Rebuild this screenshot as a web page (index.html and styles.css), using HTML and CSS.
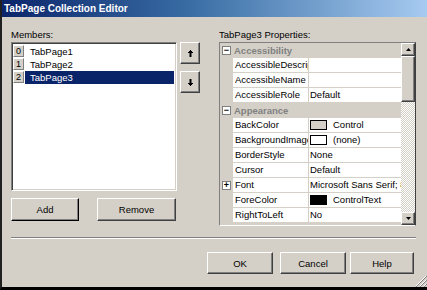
FILE: index.html
```html
<!DOCTYPE html>
<html>
<head>
<meta charset="utf-8">
<link rel="stylesheet" href="styles.css">
</head>
<body>
<div class="window">
  <div class="titlebar"><span class="title">TabPage Collection Editor</span></div>
  <div class="content">
    <div class="panes">
      <div class="left">
        <div class="label">Members:</div>
        <div class="listrow">
          <div class="list">
            <div class="item"><span class="idx">0</span><span class="iname">TabPage1</span></div>
            <div class="item"><span class="idx">1</span><span class="iname">TabPage2</span></div>
            <div class="item selected"><span class="idx">2</span><span class="iname">TabPage3</span></div>
          </div>
          <div class="movebtns">
            <div class="btn move"><svg width="5" height="7" viewBox="0 0 5 7"><rect x="2" y="0" width="1" height="1"/><rect x="1" y="1" width="3" height="1"/><rect x="0" y="2" width="5" height="1"/><rect x="1.5" y="3" width="2" height="4"/></svg></div>
            <div class="btn move down"><svg width="5" height="7" viewBox="0 0 5 7"><rect x="1.5" y="0" width="2" height="4"/><rect x="0" y="4" width="5" height="1"/><rect x="1" y="5" width="3" height="1"/><rect x="2" y="6" width="1" height="1"/></svg></div>
          </div>
        </div>
        <div class="addrow">
          <div class="btn add">Add</div>
          <div class="btn remove">Remove</div>
        </div>
      </div>
      <div class="right">
        <div class="label">TabPage3 Properties:</div>
        <div class="grid">
          <div class="rows">
            <div class="cat"><span class="margin"><span class="toggle">&#8722;</span></span><span class="cattext">Accessibility</span></div>
            <div class="prop"><span class="margin"></span><span class="pname">AccessibleDescription</span><span class="pval"></span></div>
            <div class="prop"><span class="margin"></span><span class="pname">AccessibleName</span><span class="pval"></span></div>
            <div class="prop"><span class="margin"></span><span class="pname">AccessibleRole</span><span class="pval">Default</span></div>
            <div class="cat"><span class="margin"><span class="toggle">&#8722;</span></span><span class="cattext">Appearance</span></div>
            <div class="prop"><span class="margin"></span><span class="pname">BackColor</span><span class="pval"><span class="swatch sw-control"></span>Control</span></div>
            <div class="prop"><span class="margin"></span><span class="pname">BackgroundImage</span><span class="pval"><span class="swatch sw-none"></span>(none)</span></div>
            <div class="prop"><span class="margin"></span><span class="pname">BorderStyle</span><span class="pval">None</span></div>
            <div class="prop"><span class="margin"></span><span class="pname">Cursor</span><span class="pval">Default</span></div>
            <div class="prop"><span class="margin"><span class="toggle">+</span></span><span class="pname">Font</span><span class="pval">Microsoft Sans Serif; 8.25pt</span></div>
            <div class="prop"><span class="margin"></span><span class="pname">ForeColor</span><span class="pval"><span class="swatch sw-text"></span>ControlText</span></div>
            <div class="prop"><span class="margin"></span><span class="pname">RightToLeft</span><span class="pval">No</span></div>
          </div>
          <div class="vscroll">
            <div class="sbtn"><svg width="5" height="3" viewBox="0 0 5 3"><polygon points="2.5,0 5,3 0,3"/></svg></div>
            <div class="thumb"></div>
            <div class="track"></div>
            <div class="sbtn"><svg width="5" height="3" viewBox="0 0 5 3"><polygon points="0,0 5,0 2.5,3"/></svg></div>
          </div>
        </div>
      </div>
    </div>
    <div class="sep"></div>
    <div class="footer">
      <div class="btn ok">OK</div>
      <div class="btn cancel">Cancel</div>
      <div class="btn help">Help</div>
    </div>
  </div>
  <svg class="grip" width="12" height="12" viewBox="0 0 12 12">
    <g stroke-width="1">
      <line x1="11" y1="1" x2="1" y2="11" stroke="#fff"/>
      <line x1="12" y1="1" x2="1" y2="12" stroke="#808080"/>
      <line x1="11" y1="5" x2="5" y2="11" stroke="#fff"/>
      <line x1="12" y1="5" x2="5" y2="12" stroke="#808080"/>
      <line x1="11" y1="9" x2="9" y2="11" stroke="#fff"/>
      <line x1="12" y1="9" x2="9" y2="12" stroke="#808080"/>
    </g>
  </svg>
</div>
</body>
</html>
```

FILE: styles.css
```css
* { box-sizing: border-box; }
html, body { margin: 0; padding: 0; background: #d4d0c8; }
body {
  font-family: "Liberation Sans", Arial, sans-serif;
  font-size: 9.5px;
  color: #000;
}
.window {
  position: relative;
  width: 427px;
  height: 290px;
  background: #d4d0c8;
  border-left: 2px solid #202020;
  border-bottom: 3px solid #000;
  overflow: hidden;
}
.titlebar {
  height: 17px;
  margin-left: -2px;
  padding: 3px 0 0 4px;
  background: linear-gradient(to right, #0a246a 0%, #3a6ea5 45%, #a6caf0 100%);
  color: #fff;
  font-weight: bold;
  font-size: 10px;
  line-height: 12px;
  white-space: nowrap;
}
.content {
  padding: 11px 11px 0 9px;
}
.panes {
  display: flex;
  gap: 19px;
}
.left { width: 189px; }
.right { width: 197px; }
.label {
  height: 14px;
  line-height: 14px;
  white-space: nowrap;
}
.listrow {
  display: flex;
  gap: 3px;
}
.list {
  width: 166px;
  height: 149px;
  background: #fff;
  border: 1px solid;
  border-color: #808080 #fff #fff #808080;
  box-shadow: inset 1px 1px #404040, inset -1px -1px #d4d0c8;
  padding: 2px 2px 0 1px;
}
.item {
  display: flex;
  height: 13px;
}
.idx {
  width: 11px;
  height: 12px;
  background: #d4d0c8;
  border: 1px solid;
  border-color: #fff #808080 #808080 #fff;
  font-size: 9px;
  line-height: 10px;
  text-align: center;
  margin-right: 1px;
}
.iname {
  flex: 1;
  padding-left: 5px;
  line-height: 13px;
}
.item.selected .iname {
  background: #0a246a;
  color: #fff;
}
.movebtns {
  display: flex;
  flex-direction: column;
  gap: 7px;
}
.btn {
  display: flex;
  align-items: center;
  justify-content: center;
  background: #d4d0c8;
  border: 1px solid;
  border-color: #fff #404040 #404040 #fff;
  box-shadow: inset -1px -1px #808080;
  white-space: nowrap;
}
.move { width: 20px; height: 22px; }
.move svg { fill: #000; }
.addrow {
  display: flex;
  margin-top: 7px;
  gap: 18px;
}
.add { width: 68px; height: 23px; border-color: #fff #000 #000 #fff; }
.remove { width: 79px; height: 23px; }
.grid {
  display: flex;
  height: 184px;
  border: 1px solid;
  border-color: #808080 #404040 #fff #808080;
  background: #d4d0c8;
}
.rows {
  flex: 1;
  overflow: hidden;
}
.cat, .prop {
  display: flex;
  height: 15px;
  white-space: nowrap;
}
.margin {
  width: 13px;
  flex: none;
  background: #d4d0c8;
  display: flex;
  align-items: center;
  padding-left: 2px;
}
.toggle {
  width: 9px;
  height: 9px;
  border: 1px solid #808080;
  background: #fff;
  font-size: 9px;
  line-height: 7px;
  text-align: center;
  font-weight: bold;
  color: #000;
}
.cattext {
  flex: 1;
  font-weight: bold;
  color: #808080;
  line-height: 15px;
  padding-left: 1px;
}
.pname {
  width: 76px;
  flex: none;
  overflow: hidden;
  background: #fff;
  border-right: 1px solid #d4d0c8;
  border-bottom: 1px solid #d4d0c8;
  padding-left: 2px;
  line-height: 14px;
}
.pval {
  flex: 1;
  overflow: hidden;
  background: #fff;
  border-bottom: 1px solid #d4d0c8;
  padding-left: 1px;
  line-height: 14px;
  display: flex;
  align-items: center;
}
.swatch {
  width: 17px;
  height: 10px;
  border: 1px solid #000;
  margin-right: 6px;
  flex: none;
}
.sw-control { background: #d4d0c8; }
.sw-none { background: #fff; }
.sw-text { background: #000; }
.vscroll {
  width: 14px;
  flex: none;
  display: flex;
  flex-direction: column;
}
.sbtn {
  height: 13px;
  display: flex;
  align-items: center;
  justify-content: center;
  background: #d4d0c8;
  border: 1px solid;
  border-color: #fff #404040 #404040 #fff;
  box-shadow: inset -1px -1px #808080;
}
.sbtn svg { fill: #000; }
.thumb {
  height: 46px;
  background: #d4d0c8;
  border: 1px solid;
  border-color: #fff #404040 #404040 #fff;
  box-shadow: inset -1px -1px #808080;
}
.track {
  flex: 1;
  background: repeating-conic-gradient(#fff 0 25%, #d4d0c8 0 50%) 0 0 / 2px 2px;
}
.sep {
  margin-top: 11px;
  height: 2px;
  border-top: 1px solid #808080;
  border-bottom: 1px solid #fff;
}
.footer {
  display: flex;
  justify-content: flex-end;
  margin-top: 13px;
  padding-right: 2px;
}
.footer .btn { height: 22px; }
.ok { width: 66px; }
.cancel { width: 66px; margin-left: 7px; }
.help { width: 64px; margin-left: 4px; }
.grip {
  position: absolute;
  right: 0;
  bottom: 0;
}
```
